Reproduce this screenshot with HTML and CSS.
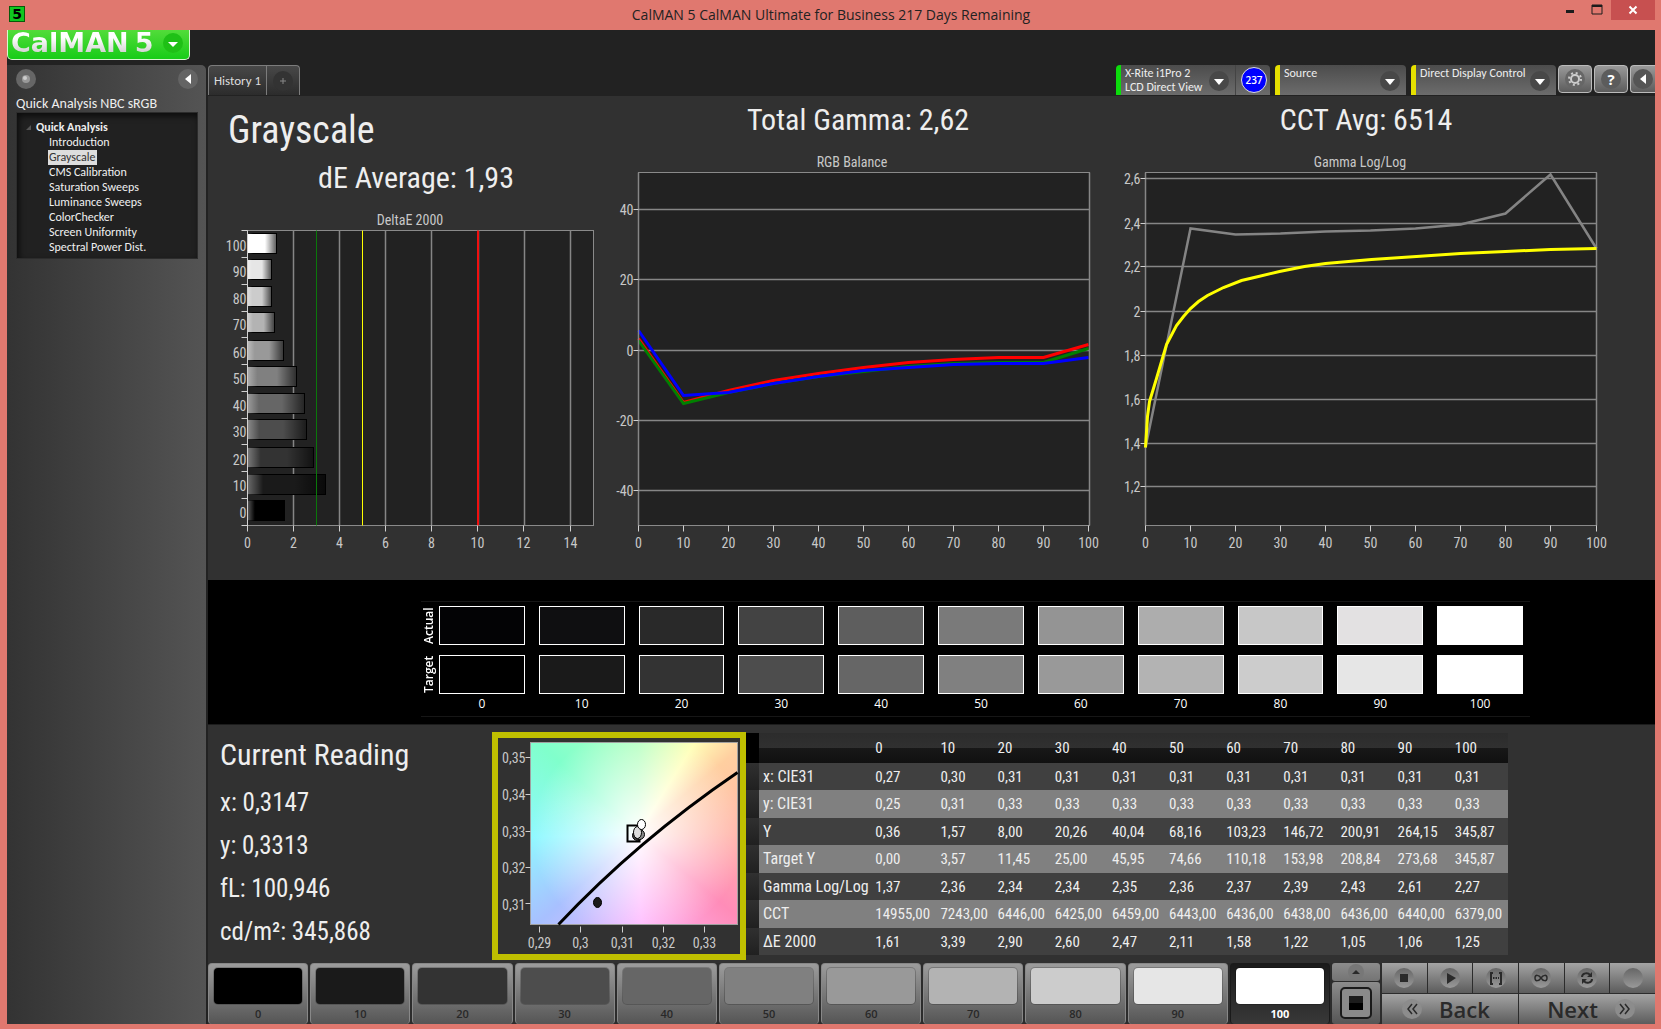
FILE: index.html
```html
<!DOCTYPE html>
<html lang="en">
<head>
<meta charset="utf-8">
<title>CalMAN 5</title>
<link rel="stylesheet" href="styles.css">
</head>
<body>
<div class="window">
  <header class="titlebar">
    <span class="app-icon">5</span>
    <h1 class="window-title">CalMAN 5 CalMAN Ultimate for Business 217 Days Remaining</h1>
    <div class="window-buttons">
      <button type="button" aria-label="Minimize"><svg width="12" height="12"><rect x="2" y="6" width="8" height="3" fill="#1c1c1c"/></svg></button>
      <button type="button" aria-label="Maximize"><svg width="12" height="12"><path d="M1 1h10v9H1z" fill="none" stroke="#1c1c1c"/><path d="M1 2h10" stroke="#1c1c1c" stroke-width="2"/></svg></button>
      <button type="button" class="close" aria-label="Close"><svg width="10" height="10"><path d="M1.500 1.500l7 7M8.500 1.500l-7 7" stroke="#fff" stroke-width="2"/></svg></button>
    </div>
  </header>

  <div class="client">
    <div class="brand-row">
      <button type="button" class="brand">
        <span class="brand-text">CalMAN</span><span class="brand-text">5</span>
        <svg class="brand-arrow" width="20" height="20" aria-hidden="true"><circle cx="10" cy="10" r="10" fill="#1fc016"/><path d="M5 9h10l-5 5z" fill="#fff"/></svg>
      </button>
    </div>

    <div class="workspace">
      <aside class="sidebar">
        <div class="sidebar-tools">
          <button type="button" class="plain" aria-label="Options"><svg width="20" height="20"><circle cx="10" cy="10" r="10" fill="#666"/><circle cx="10" cy="10" r="4" fill="#999"/><circle cx="9" cy="9" r="2" fill="#ccc"/></svg></button>
          <button type="button" class="plain" aria-label="Collapse"><svg width="20" height="20"><circle cx="10" cy="10" r="10" fill="#646464"/><path d="M13 5v10l-6-5z" fill="#fff"/></svg></button>
        </div>
        <h2 class="workflow-name">Quick Analysis NBC sRGB</h2>
        <nav class="tree">
          <div class="tree-root"><svg width="5" height="5" aria-hidden="true"><path d="M5 0v5H0z" fill="#555"/></svg>Quick Analysis</div>
          <ul>
            <li><a href="#introduction">Introduction</a></li>
            <li><a href="#grayscale" class="selected">Grayscale</a></li>
            <li><a href="#cms">CMS Calibration</a></li>
            <li><a href="#saturation">Saturation Sweeps</a></li>
            <li><a href="#luminance">Luminance Sweeps</a></li>
            <li><a href="#colorchecker">ColorChecker</a></li>
            <li><a href="#uniformity">Screen Uniformity</a></li>
            <li><a href="#spectral">Spectral Power Dist.</a></li>
          </ul>
        </nav>
      </aside>

      <main class="main">
        <div class="toolbar">
          <div class="tabs">
            <button type="button" class="tab">History 1</button>
            <button type="button" class="tab tab-add" aria-label="Add tab"><svg width="20" height="20"><circle cx="10" cy="10" r="10" fill="#333"/><path d="M7 10h6M10 7v6" stroke="#888"/></svg></button>
          </div>
          <div class="devices">
            <div class="device meter">
              <button type="button" class="device-menu"><span>X-Rite i1Pro 2<br>LCD Direct View</span><svg width="20" height="20" aria-hidden="true"><circle cx="10" cy="10" r="10" fill="#484848"/><path d="M5 8h10l-5 6z" fill="#fff"/></svg></button>
              <span class="count">237</span>
            </div>
            <div class="device source">
              <button type="button" class="device-menu"><span>Source</span><svg width="20" height="20" aria-hidden="true"><circle cx="10" cy="10" r="10" fill="#484848"/><path d="M5 8h10l-5 6z" fill="#fff"/></svg></button>
            </div>
            <div class="device display">
              <button type="button" class="device-menu"><span>Direct Display Control</span><svg width="20" height="20" aria-hidden="true"><circle cx="10" cy="10" r="10" fill="#484848"/><path d="M5 8h10l-5 6z" fill="#fff"/></svg></button>
            </div>
            <button type="button" class="tool" aria-label="Settings"><svg width="20" height="20"><circle cx="10" cy="10" r="10" fill="#666"/><circle cx="10" cy="10" r="4" fill="none" stroke="#ccc" stroke-width="2"/><circle cx="10" cy="10" r="6" fill="none" stroke="#ccc" stroke-width="2" stroke-dasharray="2 2.710"/></svg></button>
            <button type="button" class="tool" aria-label="Help"><span class="help">?</span></button>
            <button type="button" class="tool tool-cut" aria-label="Collapse panel"><svg width="20" height="20"><circle cx="10" cy="10" r="10" fill="#555"/><path d="M13 5v10l-6-5z" fill="#fff"/></svg></button>
          </div>
        </div>

        <section class="charts">
          <div class="chart-col chart-left">
            <h2 class="page-heading">Grayscale</h2>
            <h3 class="metric">dE Average: 1,93</h3>
            <svg class="chart" viewBox="0 0 400 380" role="img" aria-label="DeltaE 2000">
              <defs>
                <linearGradient id="shine"><stop offset="0" stop-color="#fff" stop-opacity=".35"/><stop offset=".2" stop-color="#fff" stop-opacity="0"/><stop offset=".6" stop-color="#000" stop-opacity="0"/><stop offset="1" stop-color="#000" stop-opacity=".65"/></linearGradient>
              </defs>
              <text class="mid" x="202" y="25">DeltaE 2000</text>
              <g transform="translate(39.500 30.500)">
                <rect class="plot" width="346" height="295"/>
                <path class="grid" d="M46 0v295M92 0v295M138 0v295M184 0v295M231 0v295M277 0v295M323 0v295"/>
                <g stroke="#000">
                  <rect x="0" y="3" width="29" height="20" fill="#fff"/><rect x="0" y="29" width="24" height="20" fill="#e6e6e6"/><rect x="0" y="56" width="24" height="20" fill="#ccc"/><rect x="0" y="82" width="27" height="20" fill="#b3b3b3"/><rect x="0" y="110" width="36" height="20" fill="#999"/><rect x="0" y="136" width="49" height="20" fill="#808080"/><rect x="0" y="163" width="57" height="20" fill="#666"/><rect x="0" y="189" width="59" height="20" fill="#4d4d4d"/><rect x="0" y="217" width="66" height="20" fill="#333"/><rect x="0" y="244" width="78" height="20" fill="#1a1a1a"/><rect x="0" y="270" width="37" height="20" fill="#000"/>
                </g>
                <g fill="url(#shine)">
                  <rect y="3" width="29" height="20"/><rect y="29" width="24" height="20"/><rect y="56" width="24" height="20"/><rect y="82" width="27" height="20"/><rect y="110" width="36" height="20"/><rect y="136" width="49" height="20"/><rect y="163" width="57" height="20"/><rect y="189" width="59" height="20"/><rect y="217" width="66" height="20"/><rect y="244" width="78" height="20"/><rect y="270" width="37" height="20"/>
                </g>
                <path d="M69 0v295" stroke="#0a780a"/><path d="M115 0v295" stroke="#ff0"/><path d="M230.500 0v295" stroke="#f01010" stroke-width="2"/>
                <path class="tick" d="M0 0h-6M0 27h-6M0 54h-6M0 81h-6M0 107h-6M0 134h-6M0 161h-6M0 188h-6M0 214h-6M0 241h-6M0 268h-6M0 295h-6M0 0v301M46 295v6M92 295v6M138 295v6M184 295v6M230 295v6M276 295v6M323 295v6"/>
                <g class="end"><text x="-1" y="20">100</text><text x="-1" y="46">90</text><text x="-1" y="73">80</text><text x="-1" y="99">70</text><text x="-1" y="127">60</text><text x="-1" y="153">50</text><text x="-1" y="180">40</text><text x="-1" y="206">30</text><text x="-1" y="234">20</text><text x="-1" y="260">10</text><text x="-1" y="287">0</text></g>
                <g class="mid"><text x="0" y="317">0</text><text x="46" y="317">2</text><text x="92" y="317">4</text><text x="138" y="317">6</text><text x="184" y="317">8</text><text x="230" y="317">10</text><text x="276" y="317">12</text><text x="323" y="317">14</text></g>
              </g>
            </svg>
          </div>

          <div class="chart-col">
            <h3 class="metric metric-top">Total Gamma: 2,62</h3>
            <svg class="chart" viewBox="0 0 500 430" role="img" aria-label="RGB Balance">
              <text class="mid" x="244" y="17">RGB Balance</text>
              <g transform="translate(30.500 22.500)">
                <rect class="plot" width="451" height="353"/>
                <path class="grid" d="M0 37h451M0 107h451M0 178h451M0 248h451M0 318h451"/>
                <g fill="none" stroke-width="3">
                  <path stroke="#f00" d="M0 166L45 230L90 218L135 208L180 201L225 195L270 190L315 187L360 185L405 185L450 172"/>
                  <path stroke="#008000" d="M0 168L45 231L90 220L135 211L180 204L225 199L270 194L315 191L360 190L405 190L450 176"/>
                  <path stroke="#00f" d="M0 158L45 223L90 220L135 211L180 204L225 198L270 195L315 192L360 191L405 191L450 185"/>
                </g>
                <path class="grid" d="M0 0v353M451 0v353"/>
                <path class="tick" d="M0 37h-5M0 107h-5M0 178h-5M0 248h-5M0 318h-5M0 353v6M45 353v6M90 353v6M135 353v6M180 353v6M225 353v6M270 353v6M315 353v6M360 353v6M405 353v6M450 353v6"/>
                <g class="end"><text x="-5" y="42">40</text><text x="-5" y="112">20</text><text x="-5" y="183">0</text><text x="-5" y="253">-20</text><text x="-5" y="323">-40</text></g>
                <g class="mid"><text x="0" y="375">0</text><text x="45" y="375">10</text><text x="90" y="375">20</text><text x="135" y="375">30</text><text x="180" y="375">40</text><text x="225" y="375">50</text><text x="270" y="375">60</text><text x="315" y="375">70</text><text x="360" y="375">80</text><text x="405" y="375">90</text><text x="450" y="375">100</text></g>
              </g>
            </svg>
          </div>

          <div class="chart-col">
            <h3 class="metric metric-top metric-cct">CCT Avg: 6514</h3>
            <svg class="chart" viewBox="0 0 547 430" role="img" aria-label="Gamma Log/Log">
              <text class="mid" x="252" y="17">Gamma Log/Log</text>
              <g transform="translate(37.500 22.500)">
                <rect class="plot" width="451" height="353"/>
                <path class="grid" d="M0 6h451M0 51h451M0 94h451M0 139h451M0 183h451M0 227h451M0 271h451M0 314h451"/>
                <path class="grid" d="M0 0v353M451 0v353"/>
                <path class="tick" d="M0 6h-5M0 51h-5M0 94h-5M0 139h-5M0 183h-5M0 227h-5M0 271h-5M0 314h-5M0 353v6M45 353v6M90 353v6M135 353v6M180 353v6M225 353v6M270 353v6M315 353v6M360 353v6M405 353v6M451 353v6"/>
                <path fill="none" stroke="#848484" stroke-width="2.500" d="M0 275L45 56L90 62L135 61L180 59L225 58L270 56L315 52L360 41L405 2L451 76"/>
                <path fill="none" stroke="#ff0" stroke-width="3" d="M0 275L2 244L4 229L11 206L21 172L31 153L38 144L45 136L53 129L62 123L78 115L96 108L113 104L134 99L159 94L180 91L226 87L271 84L315 81L360 79L405 77L451 76"/>
                <g class="end"><text x="-5" y="11">2,6</text><text x="-5" y="56">2,4</text><text x="-5" y="99">2,2</text><text x="-5" y="144">2</text><text x="-5" y="188">1,8</text><text x="-5" y="232">1,6</text><text x="-5" y="276">1,4</text><text x="-5" y="319">1,2</text></g>
                <g class="mid"><text x="0" y="375">0</text><text x="45" y="375">10</text><text x="90" y="375">20</text><text x="135" y="375">30</text><text x="180" y="375">40</text><text x="225" y="375">50</text><text x="270" y="375">60</text><text x="315" y="375">70</text><text x="360" y="375">80</text><text x="405" y="375">90</text><text x="451" y="375">100</text></g>
              </g>
            </svg>
          </div>
        </section>

        <section class="compare">
          <div class="compare-grid">
            <span class="side-label">Actual</span>
            <i style="background:#030305"></i><i style="background:#0f0f11"></i><i style="background:#292929"></i><i style="background:#434343"></i><i style="background:#5e5e5e"></i><i style="background:#7a7a7a"></i><i style="background:#949494"></i><i style="background:#adadad"></i><i style="background:#c7c7c7"></i><i style="background:#e3e1e2"></i><i style="background:#fff"></i>
            <span class="side-label">Target</span>
            <i style="background:#000"></i><i style="background:#1a1a1a"></i><i style="background:#333"></i><i style="background:#4d4d4d"></i><i style="background:#666"></i><i style="background:#808080"></i><i style="background:#999"></i><i style="background:#b3b3b3"></i><i style="background:#ccc"></i><i style="background:#e6e6e6"></i><i style="background:#fff"></i>
            <span></span>
            <b>0</b><b>10</b><b>20</b><b>30</b><b>40</b><b>50</b><b>60</b><b>70</b><b>80</b><b>90</b><b>100</b>
          </div>
        </section>

        <section class="readings">
          <div class="current">
            <h3>Current Reading</h3>
            <p>x: 0,3147</p>
            <p>y: 0,3313</p>
            <p>fL: 100,946</p>
            <p>cd/m²: 345,868</p>
          </div>

          <div class="cie">
            <svg class="chart" viewBox="0 0 242 216" role="img" aria-label="Chromaticity">
              <foreignObject x="32" y="4" width="208" height="183"><div class="cie-field"></div></foreignObject>
              <g transform="translate(32.500 4.500)">
                <rect width="207" height="182" fill="none" stroke="#a0a0a0"/>
                <path d="M28 182Q107 98 207 30" fill="none" stroke="#000" stroke-width="3"/>
                <rect x="97" y="83" width="12" height="16" fill="none" stroke="#000" stroke-width="2"/>
                <ellipse cx="107" cy="93" rx="5" ry="5" fill="#444" stroke="#000"/>
                <ellipse cx="109" cy="92" rx="5" ry="5" fill="#888" stroke="#000"/>
                <ellipse cx="107" cy="90" rx="4" ry="6" fill="#ddd" stroke="#000"/>
                <ellipse cx="111" cy="82" rx="4" ry="5" fill="#fff" stroke="#000"/>
                <ellipse cx="67" cy="160" rx="4" ry="5" fill="#1a1a1a" stroke="#000"/>
                <path class="tick" d="M0 15h-5M0 52h-5M0 89h-5M0 125h-5M0 161h-5M9 184v6M50 184v6M92 184v6M133 184v6M174 184v6"/>
                <g class="end"><text x="-5" y="20">0,35</text><text x="-5" y="57">0,34</text><text x="-5" y="94">0,33</text><text x="-5" y="130">0,32</text><text x="-5" y="167">0,31</text></g>
                <g class="mid"><text x="9" y="205">0,29</text><text x="50" y="205">0,3</text><text x="92" y="205">0,31</text><text x="133" y="205">0,32</text><text x="174" y="205">0,33</text></g>
              </g>
            </svg>
          </div>

          <table class="data">
            <colgroup><col class="c-gutter"><col class="c-name"><col class="c-first"><col span="10"></colgroup>
            <thead><tr><td></td><td></td><th>0</th><th>10</th><th>20</th><th>30</th><th>40</th><th>50</th><th>60</th><th>70</th><th>80</th><th>90</th><th>100</th></tr></thead>
            <tbody>
              <tr><td></td><th>x: CIE31</th><td>0,27</td><td>0,30</td><td>0,31</td><td>0,31</td><td>0,31</td><td>0,31</td><td>0,31</td><td>0,31</td><td>0,31</td><td>0,31</td><td>0,31</td></tr>
              <tr><td></td><th>y: CIE31</th><td>0,25</td><td>0,31</td><td>0,33</td><td>0,33</td><td>0,33</td><td>0,33</td><td>0,33</td><td>0,33</td><td>0,33</td><td>0,33</td><td>0,33</td></tr>
              <tr><td></td><th>Y</th><td>0,36</td><td>1,57</td><td>8,00</td><td>20,26</td><td>40,04</td><td>68,16</td><td>103,23</td><td>146,72</td><td>200,91</td><td>264,15</td><td>345,87</td></tr>
              <tr><td></td><th>Target Y</th><td>0,00</td><td>3,57</td><td>11,45</td><td>25,00</td><td>45,95</td><td>74,66</td><td>110,18</td><td>153,98</td><td>208,84</td><td>273,68</td><td>345,87</td></tr>
              <tr><td></td><th>Gamma Log/Log</th><td>1,37</td><td>2,36</td><td>2,34</td><td>2,34</td><td>2,35</td><td>2,36</td><td>2,37</td><td>2,39</td><td>2,43</td><td>2,61</td><td>2,27</td></tr>
              <tr><td></td><th>CCT</th><td>14955,00</td><td>7243,00</td><td>6446,00</td><td>6425,00</td><td>6459,00</td><td>6443,00</td><td>6436,00</td><td>6438,00</td><td>6436,00</td><td>6440,00</td><td>6379,00</td></tr>
              <tr><td></td><th>ΔE 2000</th><td>1,61</td><td>3,39</td><td>2,90</td><td>2,60</td><td>2,47</td><td>2,11</td><td>1,58</td><td>1,22</td><td>1,05</td><td>1,06</td><td>1,25</td></tr>
            </tbody>
          </table>
        </section>

        <footer class="controls">
          <div class="levels">
            <button type="button"><i style="background:#000"></i>0</button>
            <button type="button"><i style="background:#1a1a1a"></i>10</button>
            <button type="button"><i style="background:#333"></i>20</button>
            <button type="button"><i style="background:#4d4d4d"></i>30</button>
            <button type="button"><i style="background:#666"></i>40</button>
            <button type="button"><i style="background:#808080"></i>50</button>
            <button type="button"><i style="background:#999"></i>60</button>
            <button type="button"><i style="background:#b3b3b3"></i>70</button>
            <button type="button"><i style="background:#ccc"></i>80</button>
            <button type="button"><i style="background:#e6e6e6"></i>90</button>
            <button type="button" class="active"><i style="background:#fff"></i>100</button>
          </div>
          <div class="pattern">
            <button type="button" aria-label="Expand"><svg width="16" height="16"><circle cx="8" cy="8" r="8" fill="#777"/><path d="M4 10h8L8 6z" fill="#2a2a2a"/></svg></button>
            <button type="button" aria-label="Pattern window"><svg width="32" height="32"><rect x="1" y="1" width="30" height="30" rx="4" fill="#8a8a8a" stroke="#1a1a1a" stroke-width="2"/><rect x="9" y="9" width="14" height="14" fill="#000"/><rect x="9" y="9" width="14" height="7" fill="#1c1c1c"/></svg></button>
          </div>
          <div class="transport">
            <button type="button" aria-label="Stop"><svg width="20" height="20"><circle cx="10" cy="10" r="10" fill="url(#knob)"/><rect x="6" y="6" width="8" height="8" fill="#2a2a2a"/></svg></button>
            <button type="button" aria-label="Play"><svg width="20" height="20"><circle cx="10" cy="10" r="10" fill="url(#knob)"/><path d="M7 5l9 5-9 6z" fill="#2a2a2a"/></svg></button>
            <button type="button" aria-label="Read series"><svg width="20" height="20"><circle cx="10" cy="10" r="10" fill="url(#knob)"/><path d="M7 5H5v11h2M13 5h2v11h-2" fill="none" stroke="#2a2a2a" stroke-width="2"/><path d="M7 10h6" stroke="#2a2a2a" stroke-width="2" stroke-dasharray="1.500 1"/></svg></button>
            <button type="button" aria-label="Read continuously"><svg width="20" height="20"><circle cx="10" cy="10" r="10" fill="url(#knob)"/><path d="M10 10C8 7 4 6 4 10s4 3 6 0s6-4 6 0s-4 3-6 0z" fill="none" stroke="#2a2a2a" stroke-width="1.500"/></svg></button>
            <button type="button" aria-label="Refresh"><svg width="20" height="20"><circle cx="10" cy="10" r="10" fill="url(#knob)"/><path d="M5 9c0-4 6-5 8-2M15 11c0 4-6 5-8 2" fill="none" stroke="#2a2a2a" stroke-width="2"/><path d="M15 4v5h-5zM5 16v-5h5z" fill="#2a2a2a"/></svg></button>
            <button type="button" aria-label="Record"><svg width="20" height="20"><defs><linearGradient id="knob" x2="0" y2="1"><stop offset="0" stop-color="#666"/><stop offset="1" stop-color="#999"/></linearGradient></defs><circle cx="10" cy="10" r="10" fill="url(#knob)"/></svg></button>
            <button type="button" class="step back"><svg width="20" height="20" aria-hidden="true"><circle cx="10" cy="10" r="10" fill="#8c8c8c"/><path d="M10 5l-4 5 4 5M15 5l-4 5 4 5" fill="none" stroke="#2a2a2a" stroke-width="1.500"/></svg>Back</button>
            <button type="button" class="step">Next<svg width="20" height="20" aria-hidden="true"><circle cx="10" cy="10" r="10" fill="#8c8c8c"/><path d="M5 5l4 5-4 5M10 5l4 5-4 5" fill="none" stroke="#2a2a2a" stroke-width="1.500"/></svg></button>
          </div>
        </footer>
      </main>
    </div>
  </div>
</div>
</body>
</html>
```
FILE: styles.css
```css
* { box-sizing: border-box; }
body, h1, h2, h3, p, ul { margin: 0; padding: 0; }
button { margin: 0; padding: 0; border: 0; background: none; color: inherit; font: inherit; }
svg { display: block; flex: none; }

body {
  background: #e0786f;
  color: #eee;
  font: 12px/15px Carlito, Lato, sans-serif;
}
.window { display: flex; flex-direction: column; min-height: 100vh; padding: 0 6px 5px 7px; }

.titlebar { display: grid; grid-template-columns: 148px 1fr 148px; height: 30px; }
.app-icon {
  width: 16px; height: 16px; margin: 6px 0 0 2px; border: 1px solid #0a5a0a;
  background: #10c820; color: #000; font: 700 14px/14px "DejaVu Sans", sans-serif; text-align: center;
}
.window-title { color: #222; font: 14px/29px "Open Sans", sans-serif; text-align: center; }
.window-buttons { display: flex; justify-content: flex-end; align-items: flex-start; }
.window-buttons button { display: grid; place-items: center; width: 27px; height: 20px; }
.window-buttons .close { width: 44px; margin-left: 1px; background: #c75050; }

.client { display: flex; flex: 1; flex-direction: column; background: #222; }
.brand-row { height: 35px; }
.brand {
  display: flex; align-items: center; gap: 6px; width: 183px; height: 30px; padding: 0 6px 4px 3px;
  border: 1px solid #d8f8d0; border-top: 0; border-radius: 0 0 5px 5px;
  background: linear-gradient(#52dc3a, #17cc17);
}
.brand-text {
  background: linear-gradient(#fff 30%, #c8c8c8); background-clip: text; color: transparent;
  font: 700 27px/26px "DejaVu Sans", sans-serif;
}
.brand-arrow { margin-left: auto; }

.workspace { display: grid; flex: 1; grid-template-columns: 199px 1fr; gap: 2px; }
.sidebar { padding: 4px 8px 0 9px; border-radius: 0 5px 0 0; background: linear-gradient(90deg, #333, #545454); }
.sidebar-tools { display: flex; align-items: flex-start; justify-content: space-between; height: 27px; }
.workflow-name { margin-bottom: 1px; font-size: 14px; font-weight: 400; line-height: 15px; }
.tree {
  height: 147px; padding: 7px 0 0 9px; border: 1px solid #2c2c2c;
  background: #212121; box-shadow: inset 2px 3px 6px #000a;
}
.tree-root { display: flex; align-items: center; gap: 5px; font-weight: 700; }
.tree ul { padding-left: 22px; list-style: none; }
.tree a { display: inline-block; padding: 0 1px; color: #f0f0f0; line-height: 15px; text-decoration: none; vertical-align: top; }
.tree .selected { background: #ddd; color: #333; }

.main { display: flex; flex-direction: column; min-width: 0; }
.toolbar { display: flex; justify-content: space-between; height: 31px; padding-bottom: 1px; }
.tabs, .devices { display: flex; }
.tab {
  width: 59px; border: 1px solid #7c7c7c; border-bottom: 0; border-radius: 4px 0 0 0;
  background: linear-gradient(#484848, #2c2c2c); color: #ddd; font-size: 13px;
}
.tab-add { display: grid; place-items: center; width: 33px; border-left: 0; border-radius: 0 4px 0 0; }
.devices { gap: 5px; overflow: hidden; }
.device { display: flex; border-left: 5px solid #e6e000; border-radius: 4px 4px 0 0; background: linear-gradient(#4c4c4c, #6c6c6c); }
.device-menu { display: flex; flex: 1; justify-content: space-between; padding: 1px 6px 0 4px; text-align: left; line-height: 14px; }
.device-menu svg { margin-top: 5px; }
.meter { width: 154px; border-color: #0cdc0c; }
.source { width: 131px; }
.display { width: 145px; }
.count {
  width: 26px; height: 26px; margin: 2px 3px 0 5px; border: 1px solid #ddd; border-radius: 50%;
  background: #00f; color: #fff; font: 600 10px/24px "Open Sans", sans-serif; text-align: center;
}
.meter .device-menu { border-right: 1px solid #444; }
.tool {
  display: grid; place-items: center; width: 34px; height: 28px; margin-left: -3px;
  border: 1px solid #bbb; border-radius: 4px; background: linear-gradient(#999, #5c5c5c);
}
.tool-cut { width: 25px; border-right: 0; border-radius: 4px 0 0 4px; }
.help { width: 20px; height: 20px; border-radius: 50%; background: #5c5c5c; color: #fff; font: 700 15px/20px "Open Sans", sans-serif; text-align: center; }

.charts {
  display: grid; flex: 1 0 auto; grid-template-columns: 400fr 500fr 547fr;
  background: #313131; font-family: "Roboto Condensed", Carlito, sans-serif;
}
.chart-col { min-width: 0; }
.chart-left { padding-top: 9px; }
.page-heading { padding-left: 20px; font-size: 38px; font-weight: 400; line-height: 50px; }
.metric { padding-left: 16px; font-size: 30px; font-weight: 400; line-height: 45px; text-align: center; }
.metric-top { padding: 0 0 6px; line-height: 48px; }
.metric-cct { padding-right: 31px; }
.chart { width: 100%; height: auto; font: 14px "Roboto Condensed", Carlito, sans-serif; fill: #c8c8c8; overflow: visible; }
.chart .plot { fill: #222; stroke: #8a8a8a; }
.chart .grid { fill: none; stroke: #868686; stroke-width: 1.5; }
.chart .tick { fill: none; stroke: #d0d0d0; }
.chart .mid { text-anchor: middle; }
.chart .end { text-anchor: end; }

.compare { padding: 21px 125px 7px 213px; border-bottom: 1px solid #1c1c1c; background: #000; }
.compare-grid {
  display: grid; grid-template-columns: 4px repeat(11, 1fr); grid-template-rows: 39px 39px 10px; gap: 10px 14px;
  padding: 4px 7px 2px 0; border: solid #161616; border-width: 1px 0;
  font: 12px/15px "Open Sans", sans-serif; color: #fff;
}
.compare-grid i { border: 1px solid #fff; }
.compare-grid b { margin-top: -8px; font-weight: 400; text-align: center; }
.side-label { width: 15px; font-weight: 600; writing-mode: vertical-rl; transform: rotate(180deg); text-align: center; }

.readings {
  display: grid; grid-template-columns: 284fr 254fr 762fr 147fr; align-items: start; height: 238px; padding-top: 7px;
  background: #313131; font-family: "Roboto Condensed", Carlito, sans-serif;
}
.current { padding: 3px 0 0 12px; }
.current h3 { margin-bottom: 6px; font-size: 30px; font-weight: 400; line-height: 40px; }
.current p { font-size: 25px; line-height: 43px; }
.cie { border: 6px solid #bfbf00; }
.cie-field {
  height: 183px;
  background:
    radial-gradient(circle at 52% 50%, #fff, #fff0 75%),
    conic-gradient(from 0deg at 52% 50%, #b4ffc0, #ffffb8 32deg, #ffcfa0 50deg, #ffb4a8 90deg, #ff8cb8 130deg, #ffb8ff 178deg, #a8c0ff 228deg, #90f8ff 268deg, #80ffcc 312deg, #b4ffc0);
}
.data { width: 100%; margin-top: 1px; border-collapse: collapse; table-layout: fixed; font-size: 15px; line-height: 18px; }
.data col { width: 57px; }
.data .c-gutter { width: 13px; }
.data .c-name { width: 112px; }
.data .c-first { width: 65px; }
.data th, .data td { padding: 0 0 0 4px; font-weight: 400; text-align: left; white-space: nowrap; }
.data tbody th { font-size: 16px; }
.data thead tr { height: 30px; background: linear-gradient(#2c2c2c, #303030 50%, #181818 50%, #101010); }
.data thead td:first-child { background: #000; }
.data tbody tr { height: 27px; background: #404040; }
.data tbody tr:nth-child(even) { height: 28px; background: #808080; }
.data tbody td:first-child { background: linear-gradient(#303030, #202020); }

.controls { display: grid; grid-template-columns: 1fr 48px 273px; gap: 2px; height: 61px; background: #2c2c2c; }
.levels { display: grid; grid-template-columns: repeat(11, 1fr); gap: 2px; }
.levels button {
  display: flex; flex-direction: column; align-items: center; padding: 4px 5px 0; border: 1px solid #888; border-bottom: 0; border-radius: 4px;
  background: linear-gradient(#9c9c9c, #555); color: #282828; font: 600 11px/20px "Open Sans", sans-serif;
}
.levels i { flex: none; width: 100%; height: 36px; border-radius: 4px; box-shadow: 0 0 0 1px #0003; }
.levels .active { border-color: #1a1a1a; background: linear-gradient(#1a1a1a, #383838); color: #fff; font-weight: 700; }
.pattern { display: grid; grid-template-rows: 18px 1fr; gap: 1px; }
.pattern button { display: grid; place-items: center; border-radius: 3px; background: linear-gradient(#8c8c8c, #747474); }
.pattern button + button { background: linear-gradient(#8c8c8c, #555); }
.transport { display: grid; grid-template-columns: repeat(6, 1fr); grid-template-rows: 30px 30px; gap: 1px; }
.transport button { display: grid; place-items: center; background: linear-gradient(#a4a4a4, #5c5c5c); }
.transport .step {
  display: flex; grid-column: span 3; align-items: center; justify-content: center; gap: 17px;
  padding-left: 8px; color: #2a2a2a; font: 600 22px/28px "Open Sans", sans-serif;
}
.transport .back { padding: 0 8px 0 0; }
```
